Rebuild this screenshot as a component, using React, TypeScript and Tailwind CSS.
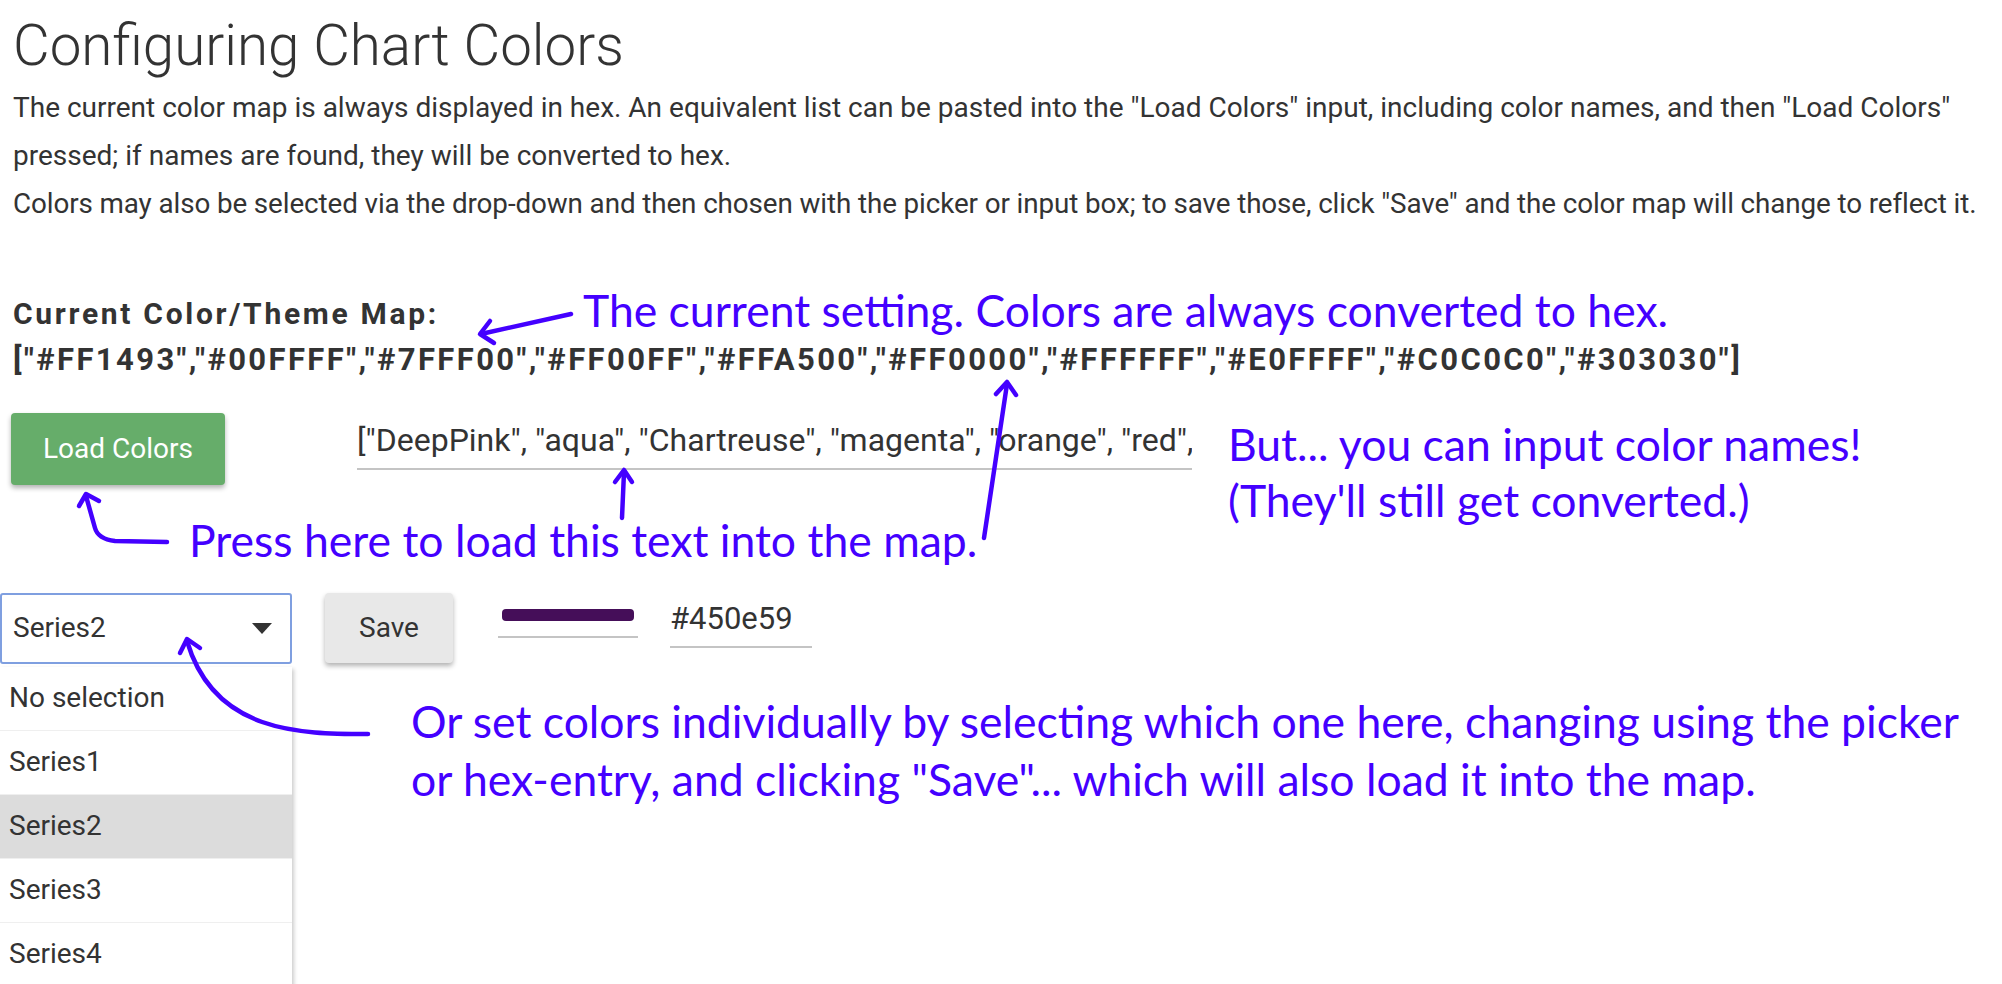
import React from "react"

const blue = "#4400ff"

function Arrows() {
  return (
    <svg
      className="pointer-events-none absolute left-0 top-0"
      width={2002}
      height={984}
      viewBox="0 0 2002 984"
      fill="none"
      stroke={blue}
      strokeWidth={4.5}
      strokeLinecap="round"
      strokeLinejoin="round"
    >
      {/* current setting -> map */}
      <path d="M571 314 L481 334" />
      <path d="M490 321 L480 334 L494 343" />
      {/* press here -> hex list */}
      <path d="M984 538 L1007 384" />
      <path d="M996 394 L1007 382 L1016 395" />
      {/* press here -> input */}
      <path d="M622 518 L624 472" />
      <path d="M615 482 L624 470 L632 482" />
      {/* press here -> load button */}
      <path d="M167 542 L115 541 Q98 539 95 528 L86 496" />
      <path d="M79 506 L86 494 L99 501" />
      {/* set colors -> select */}
      <path d="M368 734 C300 734 214 733 187 641" />
      <path d="M180 653 L187 639 L200 648" />
    </svg>
  )
}

function Note({ className, children }: { className: string; children: React.ReactNode }) {
  return (
    <div
      className={`absolute whitespace-nowrap font-['Lato',sans-serif] text-[44.5px] leading-none text-[#4400ff] ${className}`}
    >
      {children}
    </div>
  )
}

export default function App() {
  const hexMap =
    '["#FF1493","#00FFFF","#7FFF00","#FF00FF","#FFA500","#FF0000","#FFFFFF","#E0FFFF","#C0C0C0","#303030"]'
  const names = '["DeepPink", "aqua", "Chartreuse", "magenta", "orange", "red", "white", "LightCyan", "silver", "#303030"]'
  const series = ["No selection", "Series1", "Series2", "Series3", "Series4"]

  return (
    <div className="relative h-[984px] w-[2002px] overflow-hidden bg-white font-['Roboto',sans-serif] text-[#333]">
      <div className="px-[13px] pt-[18px]">
        <h1 className="text-[56.5px] font-light leading-none">Configuring Chart Colors</h1>
        <div className="mt-[9px] whitespace-nowrap text-[28px] leading-[48px]">
          <p>
            The current color map is always displayed in hex. An equivalent list can be pasted into the "Load
            Colors" input, including color names, and then "Load Colors"
          </p>
          <p>pressed; if names are found, they will be converted to hex.</p>
          <p className="text-[27.8px] tracking-[-0.1px]">
            Colors may also be selected via the drop-down and then chosen with the picker or input box; to save
            those, click "Save" and the color map will change to reflect it.
          </p>
        </div>
        <div className="mt-[63px] whitespace-nowrap font-bold">
          <p className="text-[30px] leading-[46px] tracking-[2.7px]">Current Color/Theme Map:</p>
          <p className="text-[31px] leading-[46px] tracking-[2.4px]">{hexMap}</p>
        </div>
      </div>

      <div className="mt-[30px] flex items-start">
        <button className="ml-[11px] h-[72px] w-[214px] rounded-[4px] bg-[#66ad6a] text-[28px] text-white shadow-[0_3px_5px_rgba(0,0,0,0.3)]">
          Load Colors
        </button>
        <div className="ml-[132px] h-[57px] w-[835px] overflow-hidden border-b-2 border-[#c4c4c4]">
          <input
            readOnly
            value={names}
            className="h-full w-full bg-transparent text-[32px] text-[#333] outline-none"
          />
        </div>
      </div>

      <div className="mt-[108px] flex items-start">
        <div className="relative">
          <div className="flex h-[71px] w-[292px] items-center justify-between rounded-[3px] border-2 border-[#7f9fe0] pl-[11px] pr-[18px] text-[28px]">
            <span>Series2</span>
            <span className="h-0 w-0 border-x-[10px] border-t-[11px] border-x-transparent border-t-[#333]" />
          </div>
          <div className="absolute left-0 top-full mt-[3px] w-[292px] bg-white shadow-[2px_2px_4px_rgba(0,0,0,0.2)]">
            {series.map((s) => (
              <div
                key={s}
                className={`flex h-[64px] items-center border-b border-[#efefef] pl-[9px] text-[28px] ${
                  s === "Series2" ? "bg-[#dcdcdc]" : "bg-white"
                }`}
              >
                {s}
              </div>
            ))}
          </div>
        </div>
        <button className="ml-[33px] h-[70px] w-[128px] rounded-[4px] bg-[#e8e8e8] text-[28px] text-[#333] shadow-[0_3px_5px_rgba(0,0,0,0.3)]">
          Save
        </button>
        <div className="ml-[45px] h-[45px] w-[140px] border-b-2 border-[#c4c4c4] px-[4px] pt-[16px]">
          <div className="h-[12px] w-full rounded-[4px] bg-[#450e59]" />
        </div>
        <div className="ml-[32px] flex h-[55px] w-[142px] items-center border-b-2 border-[#c4c4c4] text-[31px]">
          #450e59
        </div>
      </div>

      <Arrows />
      <Note className="left-[583px] top-[288px]">The current setting. Colors are always converted to hex.</Note>
      <Note className="left-[1228px] top-[422px]">But... you can input color names!</Note>
      <Note className="left-[1228px] top-[478px]">(They'll still get converted.)</Note>
      <Note className="left-[189px] top-[518px]">Press here to load this text into the map.</Note>
      <Note className="left-[411px] top-[699px]">
        Or set colors individually by selecting which one here, changing using the picker
      </Note>
      <Note className="left-[411px] top-[757px]">
        or hex-entry, and clicking "Save"... which will also load it into the map.
      </Note>
    </div>
  )
}
